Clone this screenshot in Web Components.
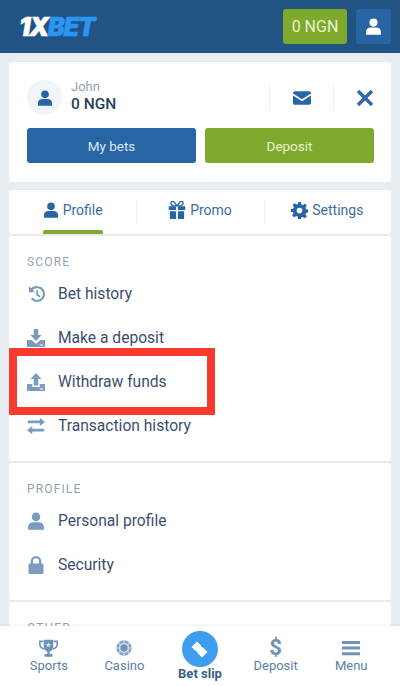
<!DOCTYPE html>
<html><head><meta charset="utf-8">
<style>
html,body{margin:0;padding:0;height:100%}
body{width:400px;height:686px;overflow:hidden;background:#e7ebf2;font-family:Roboto,"Liberation Sans",sans-serif;position:relative}
</style></head><body>
<app-shell></app-shell>
<script>
const ICONS={
user:'<circle cx="12" cy="6.500" r="5.700"/><path d="M1.500 23.500v-4C1.500 15.500 4.500 13.500 8 13.500h8c3.500 0 6.500 2 6.500 6v4z"/>',
mail:'<path d="M0 5.500C0 4.100 1.100 3 2.500 3h19C22.900 3 24 4.100 24 5.500V6l-12 7.500L0 6z"/><path d="M0 8.700l12 7.500 12-7.500v9.800c0 1.400-1.100 2.500-2.500 2.500h-19C1.100 21 0 19.900 0 18.500z"/>',
gift:'<path d="M1 7h9.800v5H1zM13.200 7H23v5h-9.800zM2.500 13.500h8.300V24H2.500zM13.200 13.500h8.300V24h-8.300z"/><path d="M12 6.500L8 1.200C7 0 4.800.2 4.200 1.700 3.500 3.500 4.700 5.500 6.500 6.500zm0 0l4-5.300c1-1.200 3.200-1 3.800.5.700 1.800-.5 3.800-2.300 4.800z" fill="none" stroke="currentColor" stroke-width="1.800"/>',
gear:'<path fill-rule="evenodd" d="M10 0h4l.7 3.400 2 .8 2.900-1.900 2.800 2.800-1.900 2.900.8 2 3.400.7v4l-3.400.7-.8 2 1.900 2.900-2.800 2.800-2.900-1.900-2 .8L14 24h-4l-.7-3.400-2-.8-2.900 1.900-2.800-2.800 1.900-2.900-.8-2L0 14v-4l3.400-.7.800-2-1.900-2.900 2.800-2.800 2.900 1.900 2-.8zm2 8a4 4 0 100 8 4 4 0 000-8z"/>',
history:'<path d="M13.500 1.500a10.500 10.500 0 11-8.400 16.800l2.300-1.800a7.600 7.600 0 106-12.100c-2.200 0-4.200 1-5.600 2.500L10.500 9.500H2.500V1.500l2.900 2.900a10.400 10.400 0 018.100-2.900z"/><path d="M12.200 7h2.400v5.300l3.500 2.200-1.300 2-4.600-3z"/>',
down:'<path d="M9 0h6v8h4.500L12 16 4.500 8H9z"/><path fill-rule="evenodd" d="M0 14.500h6l6 5 6-5h6V24H0zM17 20.500v1.500h4.500v-1.500z"/>',
up:'<path d="M12 0l7.500 8H15v8.500H9V8H4.500z"/><path fill-rule="evenodd" d="M0 14.500h7v4h10v-4h7V24H0zM17 20.500v1.500h4.500v-1.500z"/>',
swap:'<path d="M17 1l7 5.500-7 5.500V8.200H1V4.800h16zM7 12v3.800h16v3.400H7V23L0 17.500z"/>',
lock:'<path fill-rule="evenodd" d="M12 0a7 7 0 017 7v3h1a2 2 0 012 2v10a2 2 0 01-2 2H4a2 2 0 01-2-2V12a2 2 0 012-2h1V7a7 7 0 017-7zm0 3a4 4 0 00-4 4v3h8V7a4 4 0 00-4-4z"/>',
trophy:'<path d="M6 1h12v8c0 3.500-2 6-4.500 6.700V19H17v3.500H7V19h3.500v-3.300C8 15 6 12.500 6 9z"/><path d="M5.500 3H1v3c0 3.500 2.500 6 5.500 6.500M18.500 3H23v3c0 3.500-2.500 6-5.500 6.500" fill="none" stroke="currentColor" stroke-width="2"/><path d="M12 4l1 2.300 2.400.2-1.800 1.600.5 2.400-2.100-1.300-2.100 1.300.5-2.400-1.800-1.600 2.400-.2z" fill="#dfe8f1"/>',
chip:'<circle cx="12" cy="12" r="11.500" opacity=".85"/><circle cx="12" cy="12" r="7.500" fill="#dfe8f1"/><circle cx="12" cy="12" r="5.500"/><g stroke="#dfe8f1" stroke-width="1.600"><path d="M12 .5v3.500M12 20v3.500M.5 12H4M20 12h3.500M3.900 3.900l2.500 2.500M17.600 17.600l2.500 2.500M20.100 3.900l-2.500 2.500M6.400 17.600l-2.500 2.500"/></g>',
menu:'<path d="M0 2.500h24v4H0zM0 10h24v4H0zM0 17.500h24v4H0z"/>',
ticket:'<path transform="rotate(-45 12 12)" d="M6.500 1.500h11v8.200a2.300 2.300 0 000 3.600v9.200h-11v-9.200a2.300 2.300 0 000-3.600z"/>'
};
const svg=(n,s,c='currentColor')=>`<svg width="${s}" height="${s}" viewBox="0 0 24 24" fill="${c}" style="display:block;color:${c};flex:none" aria-hidden="true">${ICONS[n]}</svg>`;

class TopBar extends HTMLElement{constructor(){super();this.attachShadow({mode:'open'}).innerHTML=`<style>
:host{display:flex;align-items:center;height:53px;background:#215483;padding:0 9px 0 19px;box-sizing:border-box;gap:9px}
.logo{flex:1;font:italic 900 25.500px/1 Inter,"Liberation Sans",sans-serif;letter-spacing:-1.400px;color:#2b96f2;-webkit-text-stroke:.5px currentColor}
.logo b{color:#fff;font-weight:900}
.bal{background:#7fa92c;color:#e9f2d6;border-radius:3px;width:64px;height:35px;display:flex;align-items:center;justify-content:center;font-size:16px}
.me{width:35px;height:35px;border-radius:3px;background:#2764a3;display:flex;align-items:center;justify-content:center}
</style><div class="logo"><b>1X</b>BET</div><div class="bal">0 NGN</div><div class="me">${svg('user',17,'#fff')}</div>`}}
customElements.define('top-bar',TopBar);

class AccountCard extends HTMLElement{constructor(){super();this.attachShadow({mode:'open'}).innerHTML=`<style>
:host{display:block;background:#fff;border-radius:3px;margin:9px 9px 0;height:120px;box-sizing:border-box;padding:18px 17px 0 18px}
.top{display:flex;align-items:center;height:35px;margin-bottom:13px}
.av{width:35px;height:35px;border-radius:50%;background:#f1f4f8;display:flex;align-items:center;justify-content:center;margin-right:9px}
.who{flex:1;line-height:1;margin-top:-4px}
.n{font-size:13px;color:#97a3b2;margin-bottom:2px;line-height:15px}
.b{font-size:15.500px;font-weight:500;color:#2a3f5c;line-height:17px}
.act{width:63px;height:27px;display:flex;align-items:center;justify-content:center;border-left:1px solid #eef1f5}
.act:last-child{width:40px;justify-content:flex-end}
.btns{display:grid;grid-template-columns:1fr 1fr;gap:9px}
.btn{height:35px;border-radius:3px;display:flex;align-items:center;justify-content:center;font-size:13.500px;color:#dbe7f3}
.blue{background:#2765a5}.green{background:#7fa92c;color:#e9f2d6}
</style><div class="top"><div class="av">${svg('user',16,'#2765a5')}</div><div class="who"><div class="n">John</div><div class="b">0 NGN</div></div>
<div class="act">${svg('mail',18,'#2765a5')}</div>
<div class="act"><svg width="18" height="18" viewBox="0 0 18 18" style="display:block" aria-hidden="true"><path d="M2 2l14 14M16 2L2 16" stroke="#2b69a8" stroke-width="3.400" fill="none"/></svg></div></div>
<div class="btns"><div class="btn blue">My bets</div><div class="btn green">Deposit</div></div>`}}
customElements.define('account-card',AccountCard);

class TabBar extends HTMLElement{constructor(){super();const t=[['user','Profile',16,1],['gift','Promo',18,0],['gear','Settings',17,0]];this.attachShadow({mode:'open'}).innerHTML=`<style>
:host{display:grid;grid-template-columns:1fr 1fr 1fr;background:#fff;border-radius:3px;margin:8px 9px 0;height:44px}
.t{display:flex;align-items:center;justify-content:center;position:relative;gap:4px;font-size:14px;color:#3f6d9c;height:44px;padding-bottom:4px;box-sizing:border-box}
.t+.t::before{content:"";position:absolute;left:0;top:9px;height:25px;width:1px;background:#f0f2f6}
.u{position:absolute;bottom:0;left:34px;width:60px;height:4px;background:#7fa92c;border-radius:2px 2px 0 0}
</style>${t.map(([i,l,s,a])=>`<div class="t">${svg(i,s,'#2765a5')}<span>${l}</span>${a?'<i class="u"></i>':''}</div>`).join('')}`}}
customElements.define('tab-bar',TabBar);

class MenuCard extends HTMLElement{constructor(){super();this.attachShadow({mode:'open'}).innerHTML=`<style>
:host{display:block;background:#fff;border-radius:3px;margin:2px 9px 0;padding:19px 18px 0;box-sizing:border-box;height:var(--h,auto)}
.l{font-size:12px;line-height:14px;letter-spacing:1.15px;color:#93a2b3;margin-bottom:3px}
</style><div class="l"><slot name="label"></slot></div><slot></slot>`}}
customElements.define('menu-card',MenuCard);

class MenuRow extends HTMLElement{constructor(){super();this.attachShadow({mode:'open'}).innerHTML=`<style>
:host{display:flex;align-items:center;height:44px;gap:13px;font-size:15.600px;color:#3a5070}
.i{width:18px;height:18px;display:flex;justify-content:center}
</style><div class="i">${svg(this.getAttribute('icon'),18,'#7b9cbf')}</div><slot></slot>`}}
customElements.define('menu-row',MenuRow);

class NavItem extends HTMLElement{constructor(){super();const ic=this.getAttribute('icon');const g=ic==='dollar'?`<span class="d">$</span>`:svg(ic,ic==='menu'?18:(ic==='trophy'?19:16),'#6f92b6');this.attachShadow({mode:'open'}).innerHTML=`<style>
:host{display:flex;flex-direction:column;align-items:center;font-size:13px;color:#5d7ea3;padding-top:12px;box-sizing:border-box}
.g{height:20px;display:flex;align-items:center;justify-content:center}
.d{font:700 22px/20px Roboto,sans-serif;color:#6f92b6}
.t{line-height:16px}
</style><div class="g">${g}</div><div class="t"><slot></slot></div>`}}
customElements.define('nav-item',NavItem);

class BottomNav extends HTMLElement{constructor(){super();this.attachShadow({mode:'open'}).innerHTML=`<style>
:host{position:absolute;left:0;right:0;bottom:0;height:60px;background:#fff;display:grid;grid-template-columns:repeat(5,1fr);padding:0 11px;box-sizing:border-box;box-shadow:0 -1px 2px rgba(60,80,110,.08)}
.c{display:flex;flex-direction:column;align-items:center;padding-top:5px;box-sizing:border-box}
.o{width:36px;height:36px;border-radius:50%;background:#3e9df0;display:flex;align-items:center;justify-content:center}
.s{font-size:13px;font-weight:700;color:#37608c;line-height:16px;margin-top:-1px}
</style><nav-item icon="trophy">Sports</nav-item><nav-item icon="chip">Casino</nav-item><div class="c"><div class="o">${svg('ticket',17,'#fff')}</div><div class="s">Bet slip</div></div><nav-item icon="dollar">Deposit</nav-item><nav-item icon="menu">Menu</nav-item>`}}
customElements.define('bottom-nav',BottomNav);

class HighlightBox extends HTMLElement{constructor(){super();this.attachShadow({mode:'open'}).innerHTML=`<style>
:host{position:absolute;left:9px;top:348px;width:206px;height:67px;box-sizing:border-box;border:8px solid #f73a2e}
</style>`}}
customElements.define('highlight-box',HighlightBox);

class AppShell extends HTMLElement{constructor(){super();this.attachShadow({mode:'open'}).innerHTML=`<style>:host{display:block;height:686px;overflow:hidden}</style>
<top-bar></top-bar><account-card></account-card><tab-bar></tab-bar>
<menu-card style="--h:225px"><span slot="label">SCORE</span>
<menu-row icon="history">Bet history</menu-row><menu-row icon="down">Make a deposit</menu-row><menu-row icon="up">Withdraw funds</menu-row><menu-row icon="swap">Transaction history</menu-row></menu-card>
<menu-card style="--h:137px"><span slot="label">PROFILE</span>
<menu-row icon="user">Personal profile</menu-row><menu-row icon="lock">Security</menu-row></menu-card>
<menu-card style="--h:100px"><span slot="label">OTHER</span></menu-card>
<highlight-box></highlight-box><bottom-nav></bottom-nav>`}}
customElements.define('app-shell',AppShell);
</script>
</body></html>
